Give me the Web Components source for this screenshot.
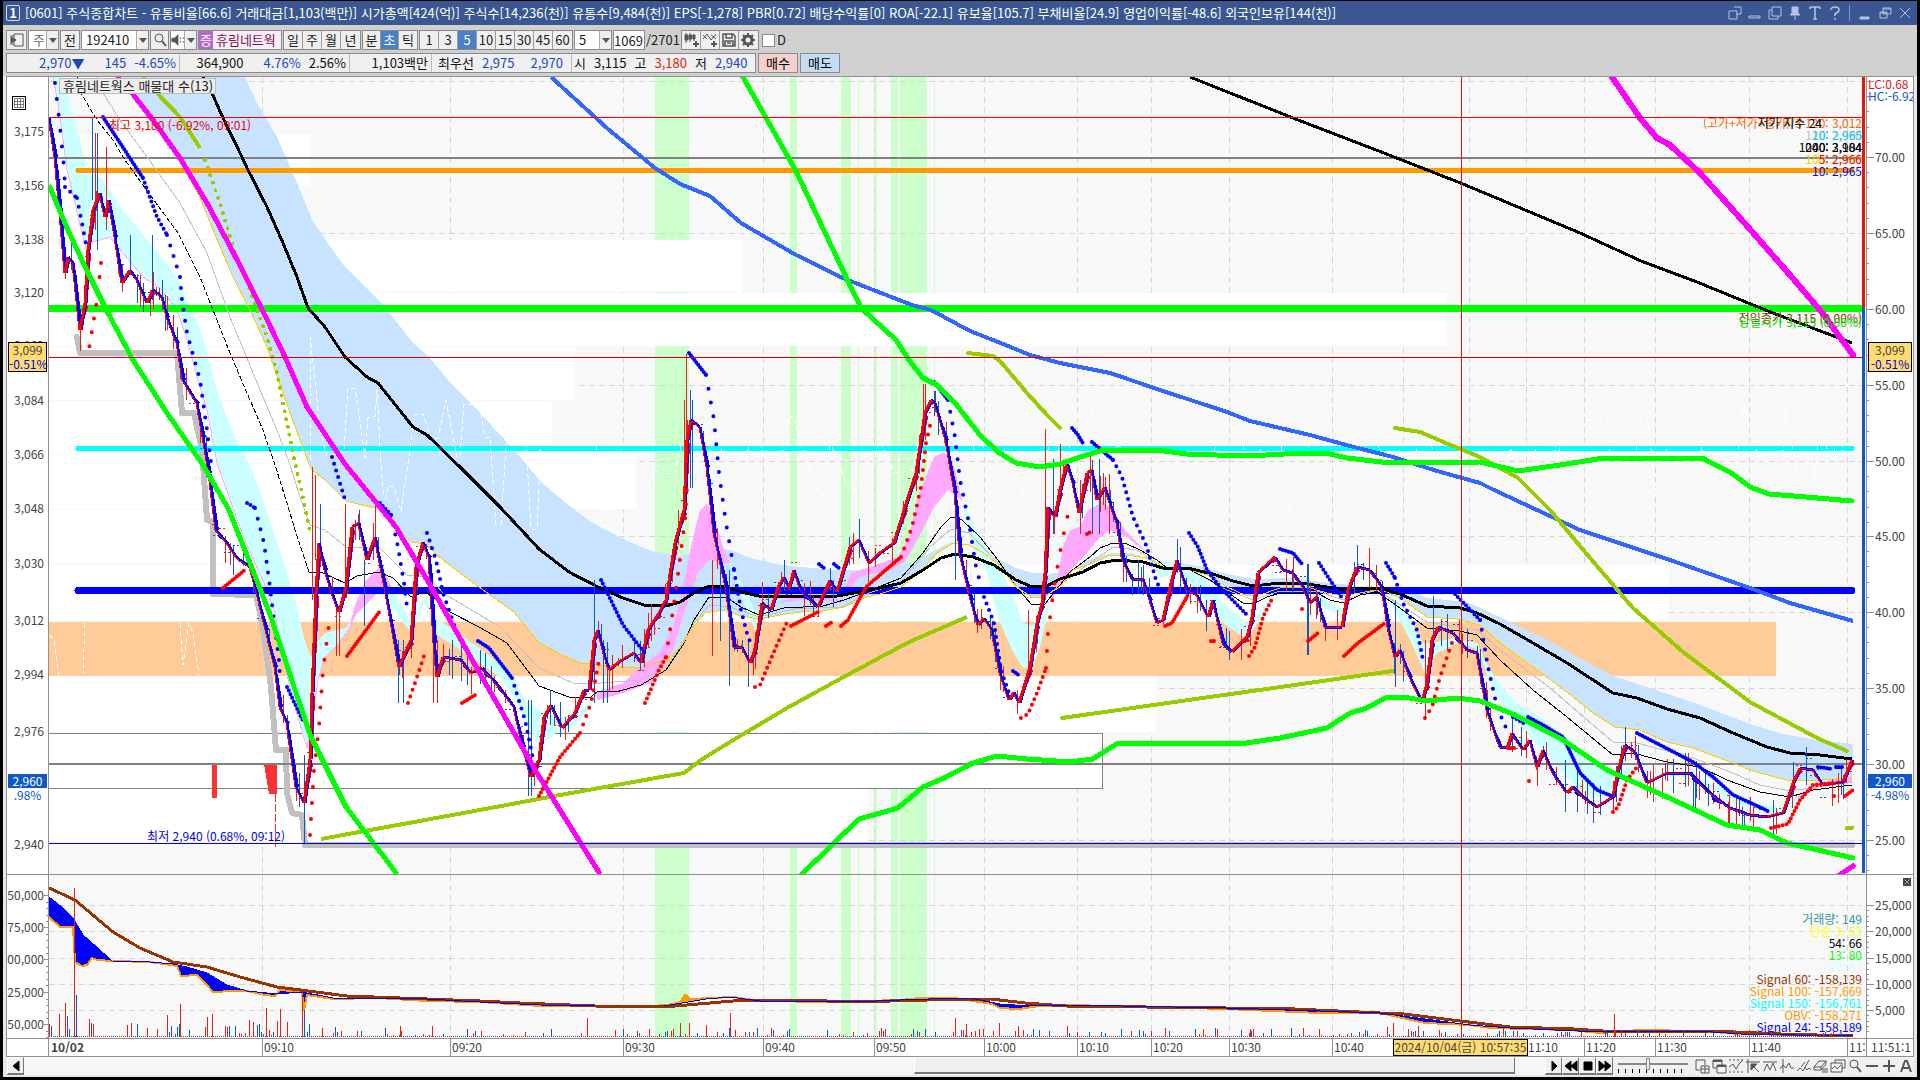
<!DOCTYPE html>
<html lang="ko">
<head>
<meta charset="utf-8">
<title>[0601] 주식종합차트</title>
<style>
  html, body { height: 100%; }
  body {
    margin: 0;
    background: #000;
    overflow: hidden;
    font: 13px/14px "Noto Sans CJK KR", sans-serif;
    color: #111;
  }
</style>
</head>
<body>
<stock-window></stock-window>

<script>
const ICONS = {
  panel: '<path d="M1 4h4M1 12h4M5 2h9v12H5z"/><path d="M2 5l5 3-5 3z" fill="currentColor"/>',
  search: '<circle cx="7" cy="6" r="4"/><path d="M10 9l4 5" stroke-width="2"/>',
  sound: '<path d="M1 6h3l4-4v12l-4-4H1z" fill="currentColor"/><path d="M11 5v6M14 5v6" stroke-dasharray="2 2"/>',
  candles: '<path d="M3 1v10M7 1v9M11 2v7"/><path d="M2 3h3v5H2zM6 3h3v4H6zM10 3h2v4h-2z" fill="currentColor"/><path d="M13 9v6M10 12h6" stroke-width="2"/>',
  lineadd: '<path d="M1 7l4-5 4 6 5-6M1 3l4 4M9 3l5 4"/><path d="M12 9v6M9 12h6" stroke-width="2"/>',
  disk: '<path d="M2 2h10l2 2v10H2zM5 2v4h6V2M4 14V9h8v5M6 11h4" stroke-width="1.5"/>',
  gear: '<circle cx="8" cy="8" r="4" stroke-width="3"/><path d="M8 1v3M8 12v3M1 8h3M12 8h3M3 3l2 2M11 11l2 2M3 13l2-2M11 5l2-2" stroke-width="2"/>',
  link: '<path d="M2 6h8v8H2zM7 2h7v7H9"/>',
  low: '<path d="M2 11h11v2H2z"/>',
  copy: '<path d="M5 2h9v9H5zM5 5H2v9h9v-3"/>',
  pin: '<path d="M5 2h6v6l2 2H3l2-2z" fill="currentColor"/><path d="M8 10v5"/>',
  letter: '<path d="M3 2h10M3 2v2M13 2v2M8 2v12M6 14h4" stroke-width="1.5"/>',
  help: '<path d="M4 5q0-3 4-3t4 3q0 2-4 4v2M8 13v2" stroke-width="1.5"/>',
  min: '<path d="M3 12h9v2H3z" fill="currentColor"/>',
  restore: '<path d="M6 3h8v6H6zM3 7h7v6H3zM6 4h8M3 8h7"/>',
  close: '<path d="M3 3l10 10M13 3L3 13"/>',
  prev: '<path d="M11 3v10L5 8z" fill="currentColor"/>',
  play: '<path d="M6 3v10l5-5z" fill="currentColor"/>',
  rewind: '<path d="M8 3v10L2 8zM14 3v10L8 8z" fill="currentColor"/>',
  stop: '<path d="M4 4h8v8H4z" fill="currentColor"/>',
  forward: '<path d="M2 3v10l6-5zM8 3v10l6-5z" fill="currentColor"/>',
  gridadd: '<path d="M11 7V2H2v10h4M7 8h8v7H7zM11 8v7M7 11h8" />',
  windows: '<path d="M2 2h9v8H2z"/><path d="M6 7h9v8H6z" fill="#f4f4f4"/><path d="M2 3h9M6 8h9" stroke-width="2"/>',
  wave: '<path d="M1 9l4-3 3 5 3-5 4-4"/><path d="M1 2h14M1 14h14" stroke-dasharray="2 2"/>',
  cross: '<path d="M3 1v14M1 4h14M8 8l6 6"/><path d="M6 6h6l-6 6z" fill="currentColor"/>',
  trend: '<path d="M1 4h14M2 13l3-7 3 6 3-7 3 8"/>',
  pulse: '<path d="M4 1v14M1 11l3-4 3 3 3-5 2 5h3"/>',
  brush: '<path d="M1 13l3-3 3 3 6-11M5 9l4-5M9 9l2 3 2-2 2 2"/>',
  eraser: '<path d="M1 9l5-6h7l-5 6zM1 9v3h7V9M8 12l5-6V3M10 10v5M12 10v5M14 10v5"/>',
  frames: '<path d="M5 2h10v8H5z"/><path d="M1 5h11v9H1z" fill="#f4f4f4"/><path d="M2 11l3-3 2 3 4-4"/>',
  minus: '<path d="M2 8h12" stroke-width="2"/>',
  plus: '<path d="M2 8h12M8 2v12" stroke-width="2"/>',
  alpha: '<path d="M3 14L7 3h2l4 11M5 10h6" stroke-width="2"/>',
  sheet: '<path d="M2 2h12v12H2zM2 6h12M2 10h12M6 2v12M10 2v12"/>'
};

function define(name, css, html, setup) {
  const template = document.createElement("template");
  template.innerHTML = `<style>* { box-sizing: border-box; } ${css}</style>${html}`;
  customElements.define(name, class extends HTMLElement {
    constructor() {
      super();
      this.attachShadow({ mode: "open" }).appendChild(template.content.cloneNode(true));
    }

    connectedCallback() {
      if (setup) setup(this, this.shadowRoot);
    }
  });
}

define("ui-icon", `
  :host { display: inline-block; width: 16px; height: 16px; flex: none; }
  svg { display: block; width: 100%; height: 100%; fill: none; stroke: currentColor; }
`, `<svg viewBox="0 0 16 16"></svg>`, (host, root) => {
  root.querySelector("svg").innerHTML = ICONS[host.getAttribute("name")];
});

define("tool-button", `
  :host { display: block; flex: none; width: 19px; height: 100%; }
  button {
    display: flex; align-items: center; justify-content: center;
    width: 100%; height: 100%; margin: 0; padding: 0;
    border: 0; border-right: 1px solid #9a9a9a;
    background: #efefef; font: inherit; color: inherit; white-space: nowrap;
  }
  :host([on]) button { background: #4a80c4; color: #fff; }
  :host([flat]) button { background: none; border: 0; }
  :host([raised]) button { border: 1px solid #fff; border-right-color: #777; border-bottom: 2px solid #777; }
  :host([last]) button { border-right: 0; }
`, `<button type="button"><slot></slot></button>`, (host, root) => {
  root.querySelector("button").setAttribute("aria-label", host.getAttribute("label") || host.textContent.trim());
});

define("tool-group", `
  :host { display: flex; flex: none; height: 20px; border: 1px solid #8a8a8a; background: #fff; overflow: hidden; }
`, `<slot></slot>`);

define("tool-select", `
  :host { display: block; flex: none; position: relative; height: 20px; border: 1px solid #8a8a8a; background: #fff; }
  select {
    appearance: none; display: block; width: 100%; height: 100%; margin: 0; padding: 0 14px 0 4px;
    border: 0; border-radius: 0; background: transparent; font: inherit; color: inherit;
  }
  i {
    position: absolute; right: 0; top: 0; bottom: 0; width: 12px; pointer-events: none;
    border-left: 1px solid #aaa; background: #efefef;
  }
  i::after { content: ""; position: absolute; left: 2px; top: 7px; border: 4px solid transparent; border-top: 5px solid #555; border-bottom: 0; }
`, `<select><option></option></select><i></i>`, (host, root) => {
  root.querySelector("option").textContent = host.getAttribute("value");
  root.querySelector("select").setAttribute("aria-label", host.getAttribute("label"));
});

define("title-bar", `
  :host { display: flex; align-items: center; height: 24px; flex: none; padding: 0 4px 0 3px; background: #3a5791; color: #fff; }
  b { width: 14px; height: 16px; border: 1px solid #cfdcf5; border-radius: 2px; text-align: center; line-height: 14px; margin-right: 5px; }
  h1 { flex: 1; margin: 0; font: inherit; white-space: nowrap; overflow: hidden; }
  nav { display: flex; gap: 3px; color: #b4c3e2; }
  tool-button { width: 17px; height: 17px; }
  hr { width: 1px; height: 16px; border: 0; margin: 0 3px; background: #8195bd; }
`, `
  <b>1</b>
  <h1>[0601] 주식종합차트 - 유통비율[66.6] 거래대금[1,103(백만)] 시가총액[424(억)] 주식수[14,236(천)] 유통수[9,484(천)] EPS[-1,278] PBR[0.72] 배당수익률[0] ROA[-22.1] 유보율[105.7] 부채비율[24.9] 영업이익률[-48.6] 외국인보유[144(천)]</h1>
  <nav>
    <tool-button flat label="연결"><ui-icon name="link"></ui-icon></tool-button>
    <tool-button flat label="내리기"><ui-icon name="low"></ui-icon></tool-button>
    <tool-button flat label="복사"><ui-icon name="copy"></ui-icon></tool-button>
    <tool-button flat label="고정"><ui-icon name="pin"></ui-icon></tool-button>
    <tool-button flat label="글꼴"><ui-icon name="letter"></ui-icon></tool-button>
    <tool-button flat label="도움말"><ui-icon name="help"></ui-icon></tool-button>
    <hr>
    <tool-button flat label="최소화"><ui-icon name="min"></ui-icon></tool-button>
    <tool-button flat label="복원"><ui-icon name="restore"></ui-icon></tool-button>
    <tool-button flat label="닫기"><ui-icon name="close"></ui-icon></tool-button>
  </nav>
`);

define("tool-bar", `
  :host { display: flex; align-items: center; gap: 1px; height: 20px; color: #222; }
  .name { display: flex; align-items: center; width: 84px; height: 20px; border: 1px solid #8a8a8a; background: #f6eef8; color: #80104c; white-space: nowrap; flex: none; }
  .name b { font-weight: 400; background: #b868d0; color: #fff; padding: 2px 1px; margin-right: 3px; }
  input[type=text] { width: 32px; height: 20px; border: 1px solid #8a8a8a; margin: 0; padding: 0; font: inherit; color: inherit; flex: none; }
  label { display: flex; align-items: center; gap: 2px; margin-left: 2px; }
  input[type=checkbox] { appearance: none; width: 13px; height: 13px; margin: 0; border: 1px solid #888; background: #fff; }
  ui-icon { color: #555; }
`, `
  <tool-group><tool-button last label="패널"><ui-icon name="panel"></ui-icon></tool-button></tool-group>
  <tool-select value="주" label="구분" style="width:31px;color:#666"></tool-select>
  <tool-group><tool-button last style="width:18px">전</tool-button></tool-group>
  <tool-select value="192410" label="종목코드" style="width:68px"></tool-select>
  <tool-group><tool-button last label="검색" style="width:17px"><ui-icon name="search"></ui-icon></tool-button></tool-group>
  <tool-select value="" label="소리" style="width:27px"></tool-select>
  <div class="name"><b>증</b>휴림네트웍</div>
  <tool-group><tool-button>일</tool-button><tool-button>주</tool-button><tool-button>월</tool-button><tool-button last>년</tool-button></tool-group>
  <tool-group><tool-button style="width:18px">분</tool-button><tool-button on style="width:18px">초</tool-button><tool-button last style="width:18px">틱</tool-button></tool-group>
  <tool-group><tool-button>1</tool-button><tool-button>3</tool-button><tool-button on>5</tool-button><tool-button>10</tool-button><tool-button>15</tool-button><tool-button>30</tool-button><tool-button>45</tool-button><tool-button last>60</tool-button></tool-group>
  <tool-select value="5" label="주기" style="width:38px"></tool-select>
  <input type="text" value="1069" aria-label="표시 개수">
  <span>/2701</span>
  <tool-group>
    <tool-button label="차트 추가"><ui-icon name="candles"></ui-icon></tool-button>
    <tool-button label="지표 추가"><ui-icon name="lineadd"></ui-icon></tool-button>
    <tool-button label="저장"><ui-icon name="disk"></ui-icon></tool-button>
    <tool-button last label="설정"><ui-icon name="gear"></ui-icon></tool-button>
  </tool-group>
  <label><input type="checkbox">D</label>
`, (host, root) => {
  // speaker glyph sits on the drop-down face
  const sound = root.querySelector('[label="소리"]');
  const icon = document.createElement("ui-icon");
  icon.setAttribute("name", "sound");
  icon.style.cssText = "position:absolute;left:0;top:1px;width:14px;color:#555";
  sound.shadowRoot.appendChild(icon);
});

define("quote-strip", `
  :host { display: flex; gap: 2px; height: 20px; }
  .strip { display: flex; width: 750px; flex: none; border: 1px solid #8a8a8a; background: #f0f0f0; }
  .cell { display: flex; flex: none; align-items: center; justify-content: flex-end; gap: 8px; padding-right: 3px; border-right: 1px solid #bbb; white-space: nowrap; }
  .cell:last-child { border: 0; flex: 1; justify-content: flex-start; padding-left: 2px; }
  .gap { margin-right: 12px; }
  .b { color: #1848c0; } .r { color: #e02010; }
  button { width: 40px; height: 20px; padding: 0; border: 1px solid #8a8a8a; background: #f5d0cc; font: inherit; }
  button + button { background: #c5ddf3; }
`, `
  <div class="strip">
    <div class="cell b" style="width:173px"><span class="gap">2,970▼</span><span>145</span><span>-4.65%</span></div>
    <div class="cell" style="width:170px"><span class="gap">364,900</span><span class="b">4.76%</span><span>2.56%</span></div>
    <div class="cell" style="width:82px">1,103백만</div>
    <div class="cell" style="width:140px;padding-right:8px"><span>최우선</span><span class="b">2,975</span><span class="b" style="margin-left:8px">2,970</span></div>
    <div class="cell"><span>시</span><span>3,115</span><span>고</span><span class="r">3,180</span><span>저</span><span class="b">2,940</span></div>
  </div>
  <button type="button">매수</button><button type="button">매도</button>
`);

define("value-axis", `
  :host { display: block; position: relative; background: #fff; border-right: 1px solid #909090; border-bottom: 1px solid #909090; overflow: hidden; color: #444; font-size: 12px; }
  :host([side=right]) { border-right: 0; border-left: 1px solid #909090; }
  span { position: absolute; right: 4px; height: 14px; margin-top: -7px; white-space: nowrap; }
  i { position: absolute; right: 0; width: 2px; height: 1px; background: #909090; }
  i.major { width: 4px; }
  :host([side=right]) span { right: auto; left: 8px; }
  :host([side=right]) i { right: auto; left: 0; }
  :host([side=right]) i.major { width: 7px; }
`, `<slot></slot>`, (host, root) => {
  const top = +host.getAttribute("top"), height = +host.getAttribute("height");
  const at = y => ((y - top) / height * 100) + "%";
  for (const pair of host.getAttribute("labels").split(";")) {
    const [text, y] = pair.split("@");
    const span = document.createElement("span");
    span.textContent = text;
    span.style.top = at(y);
    root.appendChild(span);
    if (host.hasAttribute("ticks")) {
      const step = +host.getAttribute("ticks");
      for (let k = 0; k < 5; k++) {
        const tick = document.createElement("i");
        tick.style.top = at(+y + k * step);
        if (!k) tick.className = "major";
        root.appendChild(tick);
      }
    }
  }
});

define("price-tag", `
  :host { display: block; position: absolute; z-index: 1; left: 1px; right: 1px; height: 30px; border: 1px solid #000; background: #ffdc70; line-height: 14px; text-align: center; white-space: nowrap; color: #444; }
  :host([last]) { height: 28px; border: 0; background: linear-gradient(#1058c8 14px, #fff 14px); color: #1058c8; }
  :host([last]) .price { color: #fff; }
  .rate { color: #0000e0; }
  :host([last]) .rate { color: inherit; }
`, `<div class="price"></div><div class="rate"></div>`, (host, root) => {
  root.querySelector(".price").textContent = host.getAttribute("price");
  root.querySelector(".rate").textContent = host.getAttribute("rate");
});

define("time-axis", `
  :host { display: block; position: relative; background: #fff; border-bottom: 1px solid #909090; overflow: hidden; color: #444; font-size: 12px; }
  span { position: absolute; top: 0; bottom: 0; padding: 1px 0 0 1px; border-left: 1px solid #909090; white-space: nowrap; }
  .cursor { width: 135px; border: 1px solid #000; background: #ffdc70; text-align: center; padding: 0; }
  .day { font-weight: 700; border: 0; padding-left: 2px; }
`, ``, (host, root) => {
  const at = x => ((x - 49) / 1817 * 100) + "%";
  const add = (text, x, cls) => {
    const span = document.createElement("span");
    span.textContent = text;
    span.style.left = at(x);
    if (cls) span.className = cls;
    root.appendChild(span);
  };
  add("10/02", 49, "day");
  [["09:10", 262], ["09:20", 450], ["09:30", 623], ["09:40", 763], ["09:50", 874], ["10:00", 984], ["10:10", 1077],
   ["10:20", 1151], ["10:30", 1229], ["10:40", 1332], ["11:10", 1526], ["11:20", 1584], ["11:30", 1655],
   ["11:40", 1749], ["11:50", 1847]].forEach(([t, x]) => add(t, x));
  add("2024/10/04(금) 10:57:35", 1393, "cursor");
});

// plot geometry, in plot units: 49..1866 across, 77..874 price pane, 875..1038 volume pane
const GRID_X = [262, 450, 623, 763, 874, 984, 1077, 1151, 1229, 1332, 1403, 1469, 1526, 1584, 1655, 1749, 1847];
const BANDS = [[655, 34], [790, 7], [841, 10], [858, 1], [874, 3], [891, 7], [900, 27], [934, 1]];

const PRICE = "49,117 55,157 60,213 65,273 68,257 73,263 80,330 85,303 88,250 93,210 100,193 105,217 109,200 115,237 122,283 130,270 137,280 147,303 153,290 162,297 167,317 177,343 183,380 197,403 203,437 209,473 216,530 227,543 237,558 250,567 257,593 266,630 275,667 280,707 287,723 296,787 304,803 310,760 312,693 316,593 319,543 325,570 332,593 339,612 346,587 352,527 359,523 367,560 375,537 386,593 399,667 411,640 416,567 423,542 429,557 434,643 437,677 443,657 461,660 471,673 482,668 496,683 509,700 514,707 523,747 531,777 537,763 539,760 544,717 551,705 562,728 575,713 584,690 589,690 594,640 598,630 603,650 609,670 619,662 634,653 641,663 648,630 659,613 666,600 675,543 684,510 687,440 691,420 700,427 707,467 714,533 726,587 734,647 742,647 750,663 755,650 762,603 771,610 778,587 784,577 789,588 794,570 801,590 818,607 830,580 837,592 850,547 859,540 869,563 880,553 894,543 905,507 916,473 925,413 931,400 935,403 946,440 955,493 960,553 971,600 978,625 984,618 992,630 1000,673 1009,700 1014,692 1019,703 1030,667 1037,623 1042,603 1045,573 1048,507 1055,517 1060,490 1067,462 1073,483 1079,513 1087,473 1092,470 1097,500 1105,487 1110,503 1117,523 1123,560 1132,579 1143,579 1150,600 1157,623 1163,620 1170,587 1177,560 1187,590 1197,595 1208,617 1213,600 1223,643 1232,652 1247,637 1252,617 1258,573 1275,557 1283,570 1293,573 1303,587 1310,603 1317,597 1325,627 1342,627 1348,590 1357,567 1370,570 1382,587 1388,627 1395,657 1400,650 1410,677 1422,702 1427,683 1432,640 1438,627 1453,633 1467,650 1477,653 1487,710 1500,747 1507,748 1512,733 1523,750 1530,740 1537,767 1543,750 1553,773 1567,793 1573,787 1587,800 1597,807 1613,797 1618,770 1625,745 1635,752 1647,783 1667,773 1690,773 1710,793 1730,808 1750,815 1767,817 1783,813 1793,783 1800,768 1813,770 1823,785 1843,782 1852,760";
const GOLD = "183,167 200,197 213,230 233,277 250,310 267,347 283,393 300,440 311,469 325,480 346,501 379,509 396,527 411,542 425,544 443,560 479,587 514,612 539,643 562,655 580,663 601,665 623,667 644,667 666,660 680,648 691,630 705,613 723,610 741,616 759,619 780,615 801,612 823,611 844,607 866,597 880,594 901,587 919,573 937,553 953,543 969,545 984,553 1001,567 1016,587 1032,597 1043,597 1060,587 1073,570 1093,563 1110,555 1133,556 1147,558 1163,567 1190,570 1207,575 1227,587 1247,596 1260,595 1280,588 1307,587 1327,593 1343,596 1360,593 1380,589 1400,598 1427,617 1457,619 1480,625 1503,645 1533,667 1567,692 1593,713 1615,727 1640,730 1667,742 1693,748 1720,758 1753,771 1790,781 1817,780 1852,778";
const CLOUD_TOP = "117,77 245,77 258,105 277,137 298,185 312,220 343,265 382,303 412,342 430,358 448,380 480,413 516,452 541,482 566,503 591,522 623,539 651,551 680,556 694,552 712,547 730,550 751,558 776,564 801,567 837,570 859,570 884,568 916,562 930,553 951,542 980,547 994,557 1016,568 1033,573 1050,574 1070,570 1093,558 1113,553 1133,553 1153,562 1180,563 1203,567 1223,573 1253,579 1293,578 1320,582 1360,586 1383,587 1403,588 1427,598 1467,602 1483,609 1510,622 1547,640 1583,660 1613,676 1650,688 1700,705 1750,724 1783,734 1817,740 1853,744";
const BLACK = "203,77 212,93 223,118 242,157 248,170 267,207 283,243 297,277 308,308 325,327 345,357 367,377 378,383 413,427 427,435 462,469 500,507 539,549 569,572 598,587 623,598 644,605 666,606 680,602 694,593 709,586 723,586 741,592 759,596 837,596 859,592 880,588 901,583 923,570 941,558 955,554 973,557 994,565 1016,580 1030,586 1047,586 1060,579 1083,572 1100,563 1117,560 1143,562 1163,568 1187,568 1213,574 1233,581 1253,586 1280,583 1307,584 1327,587 1347,590 1360,588 1383,589 1400,594 1427,606 1460,608 1477,613 1500,624 1533,643 1567,663 1613,693 1637,698 1667,709 1700,718 1733,733 1767,747 1790,753 1820,755 1852,759";
const THIN_EARLY = "77,77 82,95 97,120 113,140 125,160 145,188 178,233 200,277 213,310 230,353 247,393 263,430 275,465 286,500 296,533 309,572";
const THIN = "309,572 323,573 345,583 357,576 379,572 393,578 411,597 425,592 434,598 450,612 479,627 507,643 539,686 569,697 591,697 598,691 616,692 641,685 666,670 684,643 694,620 709,597 726,597 741,607 759,615 784,608 823,606 844,600 866,592 901,578 923,553 941,527 951,517 962,520 980,537 998,560 1016,587 1032,605 1045,604 1060,585 1070,572 1090,557 1100,548 1113,543 1127,544 1140,550 1157,560 1167,568 1190,570 1210,580 1227,592 1243,603 1253,604 1267,597 1280,593 1317,593 1330,600 1343,603 1360,595 1377,592 1393,603 1427,628 1460,631 1477,635 1500,660 1533,690 1567,717 1613,755 1633,753 1667,762 1700,767 1727,780 1760,792 1790,797 1813,790 1852,785";
const SILVER = "96,77 103,93 120,120 147,157 180,203 207,253 230,317 253,373 277,430 289,462 300,497 310,525 325,530 346,547 379,547 407,575 429,577 443,593 500,627 539,668 573,683 601,683 641,680 666,667 680,647 694,623 709,605 730,607 759,617 794,609 841,607 869,593 901,582 930,547 951,529 969,533 998,563 1026,597 1045,597 1060,585 1083,568 1113,547 1137,550 1163,567 1190,570 1227,590 1253,600 1280,591 1317,591 1343,600 1377,590 1427,622 1477,630 1500,650 1550,688 1613,742 1637,743 1693,758 1733,773 1760,785 1790,791 1852,782";

const CYAN_FILLS = [
  "53,77 58,103 67,170 75,203 82,233 87,252 93,242 110,237 123,253 143,277 160,288 177,310 187,340 197,377 207,410 217,463 229,497 246,543 264,583 275,613 282,653 293,700 307,748 312,720 318,680 325,657 339,643 348,630 357,613 375,593 386,597 396,613 411,633 425,603 434,633 461,650 500,677 514,697 532,733 539,748 557,732 573,727 591,707 594,697 580,712 562,717 539,710 527,703 511,673 482,650 439,620 425,597 411,622 393,590 379,588 357,610 346,628 325,633 316,642 311,657 305,642 296,603 282,557 264,503 252,470 233,433 217,390 203,337 190,307 177,277 150,243 123,210 103,180 87,170 80,140 63,77",
  "730,563 744,587 755,610 776,607 766,617 755,630 748,613 737,587",
  "962,500 980,537 991,553 1001,570 1012,593 1023,623 1032,625 1043,617 1050,593 1048,613 1040,647 1032,668 1023,668 1012,650 998,617 987,573 973,547",
  "1140,547 1160,563 1173,562 1203,573 1213,590 1227,607 1247,623 1257,617 1273,593 1270,603 1253,630 1243,637 1223,623 1207,600 1177,573 1160,578 1147,553",
  "1317,593 1330,602 1343,610 1343,618 1323,607",
  "1387,590 1407,613 1423,643 1437,642 1453,638 1477,643 1490,670 1513,700 1540,717 1567,737 1583,760 1600,763 1617,773 1633,767 1647,773 1693,773 1710,783 1733,793 1757,803 1783,807 1793,800 1810,787 1800,803 1783,813 1757,810 1727,800 1700,780 1667,775 1633,772 1617,787 1600,797 1583,792 1567,778 1553,760 1533,740 1510,713 1493,690 1478,650 1460,642 1437,653 1425,673 1410,640 1393,607"
];
const PINK_FILLS = [
  "348,632 355,605 366,580 378,568 386,575 393,590 379,592 357,613",
  "594,693 623,683 641,667 659,653 673,627 682,593 691,547 700,510 707,503 714,517 723,547 730,563 723,563 709,560 698,573 684,613 673,650 651,683 623,693 598,700",
  "780,603 801,593 818,597 841,600 851,573 876,565 898,557 909,537 919,493 934,457 944,452 953,463 962,500 948,490 934,507 919,537 905,562 891,570 859,577 841,602 801,600",
  "1050,603 1057,580 1063,547 1070,530 1080,527 1088,510 1103,502 1113,510 1127,533 1147,553 1127,537 1110,530 1097,540 1087,553 1070,570 1060,587",
  "1793,800 1813,785 1833,780 1852,776 1852,783 1820,787 1800,797"
];

// parabolic markers; the number is the gap between dots
const UP_DOTS = [
  [14, "101,263 97,300 89,349"], [16, "310,835 314,770 319,727 323,670 330,617"], [3, "223,588 246,569"], [3, "347,656 380,611"],
  [7, "408,703 416,680 425,653"], [3, "462,703 477,694"], [4, "539,796 560,757 580,733"], [9, "580,733 591,703 594,687 599,660"],
  [5, "645,703 659,670 666,657"], [14, "666,657 676,590 685,520 687,487"], [6, "755,687 760,685 776,647 788,620"], [3, "791,626 818,612"],
  [3, "826,626 832,622"], [3, "841,626 848,620 866,587 901,557"], [9, "901,557 912,527 921,487 926,443 932,417"],
  [6, "1021,718 1028,714 1037,693 1046,668"], [17, "1046,668 1048,633 1055,580 1063,537 1070,505"], [3, "1087,534 1092,531"],
  [3, "1165,626 1172,623 1188,595"], [3, "1211,641 1215,641"], [5, "1249,656 1255,647 1263,617 1273,597"], [3, "1302,609 1305,609"],
  [3, "1308,641 1318,633"], [3, "1344,656 1358,643 1385,623"], [8, "1425,718 1432,707 1440,677 1453,640"], [3, "1508,748 1515,748"],
  [3, "1529,781 1531,781"], [5, "1613,812 1618,807 1627,780 1637,767"], [4, "1771,828 1788,824 1800,800 1813,785 1833,783"],
  [3, "1834,796 1836,796"], [3, "1845,796 1853,790"]
];
const DOWN_DOTS = [
  [16, "55,83 60,127 64,167 65,187"], [7, "65,187 77,198"], [9, "77,198 82,223 87,250"], [3, "103,117 143,178"], [5, "143,178 157,217 167,235"],
  [11, "167,235 180,277 182,300 187,333 200,380 207,430 211,463"], [4, "247,503 255,508"], [11, "255,508 264,543 270,587 273,613 279,660 280,677"],
  [4, "287,687 304,723"], [7, "332,457 346,503"], [4, "380,503 391,515"], [10, "391,515 398,547 404,583 407,607"], [8, "427,533 436,560 443,593 457,633"],
  [3, "478,641 489,648 512,678"], [8, "512,678 525,720 534,763"], [4, "601,580 623,625 644,652"], [3, "689,353 706,375"],
  [14, "706,375 714,420 719,473 726,523 734,570"], [8, "734,570 741,610 748,637 753,647"], [3, "819,564 825,569"], [3, "834,564 840,569"],
  [3, "934,382 948,400"], [12, "948,400 955,437 960,480 969,523 976,567 984,597"], [7, "984,597 994,623 1001,670 1009,693"], [3, "1013,671 1020,676"],
  [3, "1072,428 1078,435 1084,445"], [3, "1092,442 1113,460"], [7, "1113,460 1122,477 1133,517 1147,547 1155,577 1163,597"],
  [4, "1189,533 1198,547 1207,570 1220,587 1248,616"], [3, "1280,549 1293,553 1302,564"], [4, "1319,563 1330,580 1342,598"],
  [4, "1386,563 1395,578"], [7, "1395,578 1403,603 1417,630 1423,660"], [4, "1455,594 1480,620"], [10, "1480,620 1488,667 1497,707 1506,728"],
  [4, "1513,717 1525,724"], [3, "1528,717 1543,725 1563,737 1580,773 1597,790 1612,796"], [3, "1637,733 1693,762 1713,777 1733,795 1770,812"],
  [3, "1818,767 1832,769"], [3, "1836,767 1843,767"]
];

const line = (points, color, width = 1, extra = "") =>
  `<polyline points="${points}" fill="none" stroke="${color}" stroke-width="${width}" stroke-linejoin="round" ${extra}/>`;
const fill = (points, color) => `<polygon points="${points}" fill="${color}"/>`;
const parse = points => points.split(" ").map(p => p.split(",").map(Number));
const reversed = points => points.split(" ").reverse().join(" ");

function seeded(seed) {
  return () => (seed = (seed * 16807) % 2147483647) / 2147483647;
}

function grid(rows, top, bottom) {
  const dash = 'stroke="#d6d6d6" stroke-width="1" stroke-dasharray="6 4"';
  return GRID_X.map(x => `<path d="M${x}.5 ${top}V${bottom}" ${dash}/>`).join("") +
    rows.map(y => `<path d="M49 ${y}.5H1862" ${dash}/>`).join("");
}

function bands(top, height) {
  return BANDS.map(([x, w]) => `<rect x="${x}" y="${top}" width="${w}" height="${height}" fill="#ccffcc"/>`).join("");
}

function candles() {
  const random = seeded(41);
  const points = parse(PRICE);
  let wicks = "", bodies = "";
  for (let i = 1; i < points.length; i++) {
    const [x0, y0] = points[i - 1], [x1, y1] = points[i];
    const rising = y1 < y0;
    const main = rising ? "#ff0000" : "#0000ff";
    if (Math.abs(y1 - y0) > 12) {
      bodies += fill(`${x0},${y0} ${x1},${y1} ${x1 + 3},${y1 + (rising ? 4 : 0)} ${x0 + 3},${y0 - (rising ? 6 : -8)}`, main);
    }
    bodies += line(`${x0},${y0} ${x1},${y1}`, main, 3);
    bodies += line(`${x0 + (rising ? 2 : -1)},${y0} ${x1 + (rising ? 2 : -1)},${y1}`, rising ? "#0000ff" : "#ff0000");
    for (let x = x0; x < x1; x += 3) {
      const y = y0 + (y1 - y0) * (x - x0) / (x1 - x0);
      const color = random() < (rising ? 0.75 : 0.4) ? "#e82018" : "#1058c8";
      if (random() < 0.38) {
        const up = Math.round(4 + random() * 18), down = Math.round(3 + random() * 20);
        wicks += `<path d="M${x}.5 ${Math.round(y - up)}V${Math.round(y + down)}" stroke="${color}"/>`;
      } else if (random() < 0.35) {
        wicks += `<path d="M${x - 3} ${Math.round(y + (random() - 0.5) * 26)}.5h8" stroke="${color}" stroke-dasharray="2 2"/>`;
      }
    }
  }
  // longest spikes
  [[92, 117, 200, 0], [95, 133, 230, 1], [97, 133, 250, 0], [106, 147, 230, 1], [130, 235, 275, 0], [152, 235, 300, 0], [312, 467, 600, 1], [315, 475, 560, 1], [320, 504, 560, 0],
   [336, 610, 656, 1], [339, 610, 656, 1],
   [345, 504, 590, 1], [364, 560, 626, 0], [375, 504, 540, 1], [304, 755, 843, 0], [398, 640, 703, 0], [403, 640, 703, 0], [433, 640, 703, 1], [437, 640, 703, 1],
   [531, 700, 796, 0], [528, 700, 796, 0], [594, 580, 703, 0], [603, 640, 703, 0], [607, 642, 703, 0], [686, 354, 450, 1],
   [684, 400, 510, 1], [690, 390, 488, 0], [692, 400, 488, 0], [712, 560, 656, 1], [720, 560, 641, 0], [729, 570, 686, 0], [748, 640, 687, 0], [923, 384, 440, 1], [925, 384, 440, 1],
   [955, 480, 580, 0], [1045, 429, 600, 1], [1028, 610, 680, 1], [1053, 459, 534, 0], [1060, 444, 490, 1], [1080, 480, 534, 1],
   [1092, 460, 534, 0], [1099, 459, 534, 0], [1109, 474, 534, 1], [1307, 564, 655, 0], [1308, 564, 655, 0], [1433, 596, 650, 0], [1395, 600, 687, 0],
   [1425, 640, 720, 1], [1565, 760, 812, 0], [1577, 765, 812, 0], [1693, 780, 812, 0], [1695, 780, 812, 0], [1729, 795, 828, 1], [1736, 798, 828, 1], [1744, 812, 828, 0]
  ].forEach(([x, a, b, red]) => wicks += `<path d="M${x}.5 ${a}V${b}" stroke="${red ? "#e82018" : "#1058c8"}"/>`);
  return wicks + bodies;
}

function whiteTrace() {
  const random = seeded(97);
  let d = "M310 460V337L314 370 320 430 327 457 344 450 348 388 355 388 360 420 365 458 368 418 375 416 377 390 381 466";
  let x = 384;
  while (x < 1850) {
    const step = 2 + random() * 9;
    const y = 452 + (random() - 0.45) * (x < 640 ? 150 : 110);
    d += `L${Math.round(x)} ${Math.round(y)}`;
    if (random() < 0.5) d += `H${Math.round(x + step)}`;
    x += step * 2;
  }
  return `<path d="${d}M49 635l5 4 5 36M85 623l-2 52M180 623l3 42 6-42 4 10 6 42" fill="none" stroke="#fff" stroke-dasharray="5 3"/>`;
}

function pricePlot() {
  const round = 'stroke-linecap="round"';
  const dots = (set, color) => set.map(([gap, pts]) => line(pts, color, 4, `${round} stroke-dasharray="0 ${gap}" shape-rendering="auto"`)).join("");
  return bands(77, 797) + grid([81, 157, 233, 309, 385, 461, 536, 612, 688, 764, 840], 77, 874) +
    // volume profile
    [[134, 52, 310], [186, 54, 301], [240, 53, 742], [293, 54, 1447], [347, 54, 575], [401, 54, 552], [455, 55, 636], [510, 55, 450], [565, 57, 1669], [676, 57, 1156], [788, 55, 868]]
      .map(([y, h, x]) => `<rect x="49" y="${y}" width="${x - 49}" height="${h - 1}" fill="#fff"/>`).join("") +
    `<rect x="49" y="622" width="1727" height="54" fill="#ffcc99"/><rect x="40" y="733.5" width="1062.5" height="55" fill="#fff" stroke="#808080"/>` +
    fill(CLOUD_TOP + " " + reversed(GOLD), "#c8e3ff") +
    CYAN_FILLS.map(p => fill(p, "#ccffff")).join("") + PINK_FILLS.map(p => fill(p, "#ffaaff")).join("") +
    `<rect x="212" y="764" width="5" height="34" fill="#ff3030"/><path d="M264 764h13v30h-8z" fill="#ff3030"/><path d="M275.5 794V847" stroke="#ff3030" stroke-dasharray="8 2"/>` +
    line("53,77 58,103 67,170 75,203 82,233 87,252 93,242 110,237 123,253 143,277 160,288 177,310 187,340 197,377 207,410 217,463 229,497 246,543 264,583 275,613 282,653 293,700 307,748 312,720 318,680 325,657 339,643 348,630", "#ffaaff") +
    line("77,337 80,353 177,353 182,413 194,413 202,450 207,520 213,522 213,594 256,595 263,627 271,687 276,750 286,750 287,793 292,813 302,815 305,845 1852,845", "#c0c0c0", 6, round) +
    line("49,157.5 1862,157.5", "#808080", 2) + line("49,764 1862,764", "#808080", 2) +
    line("78,170.5 1852,170.5", "#ff9900", 5, round) + line("49,308.5 1862,308.5", "#00ff00", 7) +
    line("78,448.5 1852,448.5", "#00ffff", 5, round) + line("78,590.5 1852,590.5", "#0000ff", 7, round) +
    whiteTrace() +
    line(SILVER, "#c0c0c0") + line(THIN_EARLY, "#000", 1, 'stroke-dasharray="5 2"') + line(THIN, "#000") + line(GOLD, "#ffcc00") +
    line(BLACK, "#000", 3) +
    line("551,77 608,129 655,168 680,184 710,196 741,223 796,255 845,279 912,305 931,310 970,331 1003,344 1030,355 1060,363 1110,373 1160,390 1227,412 1250,421 1310,435 1350,446 1393,457 1437,471 1480,483 1494,490 1580,530 1670,560 1750,588 1790,603 1853,621", "#3366ff", 4) +
    line("1190,77 1298,120 1384,153 1463,184 1580,233 1641,261 1697,282 1753,305 1773,313 1852,343", "#000", 3) +
    line("143,77 157,93 180,117 200,148", "#99cc00", 4) +
    line("205,160 220,203 233,247 250,290 267,337 277,373 283,403 295,463 302,493 310,532", "#99cc00", 4, round + ' stroke-dasharray="0 8"') +
    line("321,839 480,810 560,795 684,773 701,760 730,742 787,708 851,673 909,642 967,617", "#99cc00", 4) +
    line("968,353 993,356 1000,361 1027,393 1047,415 1060,428", "#99cc00", 4, round) +
    line("1062,718 1393,671", "#99cc00", 4, round) +
    line("1395,428 1420,432 1453,446 1480,457 1518,478 1550,510 1590,558 1633,608 1683,652 1750,702 1817,738 1847,751", "#99cc00", 4, round) +
    line("1847,828 1852,828", "#99cc00", 4, round) +
    candles() + dots(UP_DOTS, "#ff0000") + dots(DOWN_DOTS, "#0000ff") +
    line("49,185 67,228 88,273 108,313 133,360 167,413 203,465 229,510 250,563 271,617 296,693 311,737 346,807 397,874", "#00ff00", 5) +
    line("743,77 796,171 845,275 861,308 896,340 909,360 923,378 937,385 955,403 980,435 998,452 1016,463 1040,467 1060,464 1080,457 1100,451 1127,450 1157,450 1187,454 1247,456 1303,453 1330,454 1347,458 1390,463 1480,462 1518,471 1560,465 1604,458 1702,458 1733,474 1750,487 1769,494 1806,497 1852,501", "#00ff00", 5, round) +
    line("802,874 859,819 884,812 898,808 923,787 944,778 973,763 997,756 1027,759 1070,762 1093,759 1107,750 1118,743 1207,743 1240,744 1280,738 1327,728 1350,713 1367,708 1385,698 1403,697 1427,701 1457,698 1480,701 1513,714 1563,740 1607,770 1667,797 1727,825 1760,830 1787,843 1853,858", "#00ff00", 5, round) +
    line("117,77 132,93 153,120 180,158 207,203 233,252 260,305 285,357 307,407 345,464 396,527 429,583 479,672 537,773 555,802 600,874", "#ff00ff", 5) +
    line("1612,77 1640,118 1657,138 1670,145 1700,173 1748,227 1783,267 1820,310 1853,355", "#ff00ff", 6, round) +
    line("1838,876 1853,866", "#ff00ff", 5, round) +
    line("49,117.5 1862,117.5", "#f00000") + line("49,357.5 1862,357.5", "#d80000") + line("49,843.5 1862,843.5", "#0000e0") +
    line("1461.5,77 1461.5,874", "#e01010") +
    `<rect x="1862" y="77" width="3" height="231" fill="#e01810"/><rect x="1862" y="308" width="3" height="565" fill="#1058c8"/>`;
}

function volumePlot() {
  const random = seeded(7);
  let bars = "";
  for (let x = 49; x < 1853; x += 2) {
    const busy = x < 340 ? 12 : x < 1320 ? 7 : 5;
    const h = random() < 0.24 ? 2 + Math.round(random() * busy) : 1;
    bars += `<path d="M${x}.5 1037V${1037 - h}" stroke="${random() < 0.5 ? "#e82018" : "#1058c8"}"/>`;
  }
  [[74, 888, 1], [76, 995, 0], [65, 1003, 1], [67, 1016, 0], [59, 1014, 1], [89, 1019, 1], [91, 1023, 0], [167, 1015, 1], [180, 1004, 1], [207, 1017, 1],
   [212, 1014, 1], [249, 1020, 1], [253, 1022, 1], [266, 1008, 1], [277, 1021, 1], [280, 1009, 1], [287, 1022, 1], [302, 995, 1], [304, 1010, 0],
   [322, 1028, 1], [400, 1026, 1], [432, 1026, 1], [587, 1018, 1], [680, 1023, 1], [689, 1023, 1], [706, 1025, 1], [730, 1013, 1], [881, 1028, 1], [955, 1018, 1],
   [966, 1024, 1], [999, 1023, 1], [1018, 1026, 1], [1067, 1026, 1], [1217, 1029, 1], [1250, 1029, 1], [1387, 1027, 1], [1393, 1023, 1], [1408, 1029, 1],
   [1418, 1026, 1], [1503, 1028, 1], [1614, 1014, 1]]
    .forEach(([x, y, red]) => bars += `<path d="M${x}.5 1037V${y}" stroke="${red ? "#e82018" : "#1058c8"}"/>`);
  const obv = "49,917 60,927 73,927 75,962 82,966 87,965 92,958 97,960 112,961 150,962 177,966 181,976 197,975 207,985 213,992 233,991 247,991 265,995 275,996 280,990 302,992 304,1010 307,995 333,999 377,998 427,1001 480,1002 540,1006 595,1006 640,1007 665,1005 680,1003 686,995 690,999 733,997 760,1001 830,1002 900,1000 920,998 955,998 992,1004 1000,1008 1018,1009 1040,1006 1070,1005 1226,1009 1320,1013 1380,1013 1425,1023 1470,1025 1490,1028 1570,1030 1600,1033 1640,1030 1700,1031 1740,1034 1853,1036";
  const signal = "49,897 63,908 73,918 83,935 100,950 112,961 150,962 173,964 187,967 207,973 227,985 247,991 277,994 302,992 333,998 377,998 427,999 480,1002 540,1005 595,1006 664,1006 706,999 730,997 760,1001 853,1002 900,1000 930,999 970,998 1000,1004 1030,1006 1070,1005 1226,1008 1320,1011 1380,1013 1425,1019 1470,1025 1510,1028 1600,1032 1640,1031 1700,1031 1740,1034 1853,1036";
  return bands(875, 163) + grid([905, 931, 958, 984, 1010], 875, 1038) +
    fill(signal + " " + reversed(obv), "#0000ff") + line(obv, "#ff9900", 2) +
    fill("650,1005 668,1004 680,1001 684,994 687,994 690,998 700,999 680,1004 664,1007", "#ff9900") +
    line("49,888 75,900 113,932 140,948 173,962 207,967 240,977 277,987 347,996 400,998 480,1001 520,1003 595,1006 664,1007 733,1001 801,1000 853,1002 928,1000 991,999 1025,1003 1066,1006 1226,1008 1295,1009 1380,1013 1396,1013 1460,1021 1510,1027 1574,1029 1617,1032 1710,1031 1781,1034 1853,1036", "#993300", 3) +
    line(signal, "#0000ff", 1) + bars + line("1461.5,875 1461.5,1038", "#e01010");
}

define("chart-plot", `
  :host { display: block; position: relative; min-width: 0; min-height: 0; overflow: hidden; background: #f8f8f8; border-bottom: 1px solid #909090; font-size: 12px; }
  svg { position: absolute; inset: 0; width: 100%; height: 100%; display: block; }
`, `<svg preserveAspectRatio="none" shape-rendering="crispEdges" role="img"></svg><slot></slot>`, (host, root) => {
  const svg = root.querySelector("svg");
  const main = host.getAttribute("kind") === "price";
  svg.setAttribute("viewBox", main ? "49 77 1817 797" : "49 875 1817 163");
  svg.setAttribute("aria-label", main ? "가격 차트" : "거래량 차트");
  svg.innerHTML = main ? pricePlot() : volumePlot();
});

define("plot-label", `
  :host { position: absolute; white-space: nowrap; height: 14px; }
  :host([box]) { height: 16px; padding: 0 2px 0 3px; border: 1px solid #bbb; background: #ededed; color: #222; font-size: 13px; }
`, `<slot></slot>`);

define("signal-legend", `
  :host { position: absolute; right: 4px; bottom: 5px; display: flex; flex-direction: column; align-items: flex-end; line-height: 12px; white-space: nowrap; }
`, `<slot></slot>`);

define("scroll-row", `
  :host { display: flex; align-items: stretch; height: 18px; flex: none; margin: 0 3px 2px 4px; background: #f0f0f0; }
  .track { flex: 1; background: repeating-conic-gradient(#eee 0 25%, #fff 0 50%) 0 0 / 2px 2px; }
  .thumb { margin-left: 58.5%; width: 39.5%; height: 17px; background: #efefef; border: 1px solid #fff; border-right: 1px solid #777; border-bottom: 2px solid #777; }
  tool-button { width: 17px; color: #000; }
  .zoom { width: 80px; padding: 2px 5px 0; }
  input { appearance: none; display: block; width: 100%; height: 10px; margin: 0; background: linear-gradient(#888, #888) 0 4px / 100% 2px no-repeat; }
  input::-webkit-slider-thumb { appearance: none; width: 4px; height: 12px; border: 1px solid #888; background: #eee; }
  .ticks { height: 4px; background: repeating-linear-gradient(90deg, #000 0 1px, transparent 1px 7px); }
  nav { display: flex; }
  nav tool-button { width: 17px; color: #555; }
`, `
  <tool-button raised label="왼쪽"><ui-icon name="prev"></ui-icon></tool-button>
  <div class="track"><div class="thumb"></div></div>
  <tool-button raised label="재생"><ui-icon name="play"></ui-icon></tool-button>
  <tool-button raised label="뒤로"><ui-icon name="rewind"></ui-icon></tool-button>
  <tool-button raised label="정지"><ui-icon name="stop"></ui-icon></tool-button>
  <tool-button raised label="앞으로"><ui-icon name="forward"></ui-icon></tool-button>
  <div class="zoom"><input type="range" min="0" max="100" value="42" aria-label="속도"><div class="ticks"></div></div>
  <nav>
    ${[["gridadd", "분할"], ["windows", "창"], ["wave", "파동"], ["cross", "십자선"], ["trend", "추세"], ["pulse", "신호"], ["brush", "그리기"],
       ["eraser", "지우기"], ["frames", "겹치기"], ["search", "돋보기"], ["minus", "축소"], ["plus", "확대"], ["alpha", "자동"]]
      .map(([icon, label]) => `<tool-button flat label="${label}"><ui-icon name="${icon}"></ui-icon></tool-button>`).join("")}
  </nav>
`);

define("stock-window", `
  :host { display: flex; flex-direction: column; height: calc(100vh - 4px); margin: 1px 3px 3px; background: #e8e8e8; }
  header { display: flex; flex-direction: column; gap: 3px; height: 51px; flex: none; padding: 5px 0 0 3px; background: #d0d0d0; }
  main {
    flex: 1; min-height: 0; margin: 0 3px;
    display: grid; grid-template: 798fr 164fr 18px / 42px minmax(0, 1fr) 47px;
    border: 1px solid #909090; border-bottom: 0; background: #fff;
  }
  .corner { border-right: 1px solid #909090; border-bottom: 1px solid #909090; }
  .clock { border-left: 1px solid #909090; border-bottom: 1px solid #909090; padding: 1px 0 0 4px; overflow: hidden; white-space: nowrap; color: #444; font-size: 12px; }
  .sheet { position: absolute; left: 5px; top: 19px; width: 14px; height: 14px; border: 1px solid #000; color: #555; }
  .close { position: absolute; right: 2px; top: 3px; width: 8px; height: 8px; background: #444; color: #fff; }
`, `
  <title-bar></title-bar>
  <header><tool-bar></tool-bar><quote-strip></quote-strip></header>
  <main>
    <value-axis top="77" height="797" labels="3,175@131;3,156@185;3,138@239;3,120@292;3,102@345;3,084@400;3,066@454;3,048@508;3,030@563;3,012@620;2,994@674;2,976@731;2,958@788;2,940@844">
      <ui-icon class="sheet" name="sheet"></ui-icon>
      <price-tag price="3,099" rate="-0.51%" style="top:33.3%"></price-tag>
      <price-tag last price="2,960" rate=".98%" style="top:87.4%"></price-tag>
    </value-axis>
    <chart-plot kind="price">
      <plot-label box style="left:10px;top:1px">휴림네트웍스 매물대 수(13)</plot-label>
      <plot-label style="left:3.3%;top:5.1%;color:#f00000">최고 3,180 (-6.92%, 09:01)</plot-label>
      <plot-label style="left:5.4%;top:94.4%;color:#0000e0">최저 2,940 (0.68%, 09:12)</plot-label>
      <plot-label style="right:4px;top:4.9%;color:#ff6600">(고가+저가+종가)/3 120: 3,012</plot-label>
      <plot-label style="right:44px;top:4.9%;color:#000">저가 지수 24</plot-label>
      <plot-label style="right:4px;top:6.4%;color:#c0c0c0">120: 2,980</plot-label>
      <plot-label style="right:4px;top:6.4%;color:#00c8ff">10: 2,965</plot-label>
      <plot-label style="right:4px;top:7.9%;color:#000">1000: 3,104</plot-label>
      <plot-label style="right:4px;top:7.9%;color:#000">240: 2,984</plot-label>
      <plot-label style="right:4px;top:9.4%;color:#ffcc00">100: 2,960</plot-label>
      <plot-label style="right:4px;top:9.4%;color:#f00000">5: 2,966</plot-label>
      <plot-label style="right:4px;top:10.9%;color:#0000ff">10: 2,965</plot-label>
      <plot-label style="right:4px;top:29.3%;color:#993300">전일종가 3,115 (0.00%)</plot-label>
      <plot-label style="right:4px;top:29.8%;color:#00e000">당일시가 3,115 (0.00%)</plot-label>
    </chart-plot>
    <value-axis side="right" top="77" height="797" ticks="15.2" labels="@81;70.00@157;65.00@233;60.00@309;55.00@385;50.00@461;45.00@536;40.00@612;35.00@688;30.00@764;25.00@840">
      <plot-label style="left:1px;top:0;color:#e01810">LC:0.68</plot-label>
      <plot-label style="left:1px;top:12px;color:#1058c8">HC:-6.92</plot-label>
      <price-tag price="3,099" rate="-0.51%" style="top:33.3%"></price-tag>
      <price-tag last price="2,960" rate="-4.98%" style="top:87.4%"></price-tag>
    </value-axis>

    <value-axis top="875" height="163" ticks="6.5" labels="50,000@895;75,000@927;00,000@959;25,000@992;50,000@1024"></value-axis>
    <chart-plot kind="volume">
      <signal-legend>
        <span style="color:#339999">거래량: 149</span>
        <span style="color:#ffff00">단순 3: 53</span>
        <span style="color:#000">54: 66</span>
        <span style="color:#00ff00">13: 80</span>
        <span style="color:#ccffff">27: 67</span>
        <span style="color:#993300">Signal 60: -158,139</span>
        <span style="color:#ff9900">Signal 100: -157,669</span>
        <span style="color:#00ffff">Signal 150: -156,761</span>
        <span style="color:#ff9900">OBV: -158,271</span>
        <span style="color:#0000ff">Signal 24: -158,189</span>
      </signal-legend>
    </chart-plot>
    <value-axis side="right" top="875" height="163" ticks="5.3" labels="25,000@905;20,000@931;15,000@958;10,000@984;5,000@1010">
      <ui-icon class="close" name="close"></ui-icon>
    </value-axis>

    <div class="corner"></div>
    <time-axis></time-axis>
    <div class="clock">11:51:1</div>
  </main>
  <scroll-row></scroll-row>
`);
</script>
</body>
</html>
